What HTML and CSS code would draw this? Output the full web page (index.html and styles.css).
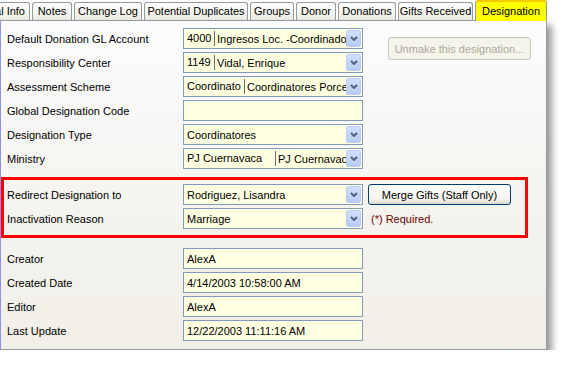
FILE: index.html
```html
<!DOCTYPE html>
<html lang="en">
<head>
    <meta charset="UTF-8">
    <meta name="viewport" content="width=device-width, initial-scale=1.0">
    <title>Designation</title>
    <link rel="stylesheet" href="styles.css">
</head>
<body>

<div class="window">
    <div class="tabs">
        <div class="tab tab-info">General Info</div>
        <div class="tab tab-notes">Notes</div>
        <div class="tab tab-log">Change Log</div>
        <div class="tab tab-dupes">Potential Duplicates</div>
        <div class="tab tab-groups">Groups</div>
        <div class="tab tab-donor">Donor</div>
        <div class="tab tab-donations">Donations</div>
        <div class="tab tab-gifts">Gifts Received</div>
        <div class="tab tab-designation active">Designation</div>
    </div>

    <div class="panel">
        <div class="top">
            <div class="form">
                <div class="row">
                    <span class="label">Default Donation GL Account</span>
                    <div class="field combo">
                        <span class="col col-narrow">4000</span>
                        <span class="col col-rest">Ingresos Loc. -Coordinado</span>
                        <span class="arrow"><svg width="8" height="5" viewBox="0 0 8 5"><path d="M1 1 L4 4 L7 1" /></svg></span>
                    </div>
                </div>
                <div class="row">
                    <span class="label">Responsibility Center</span>
                    <div class="field combo">
                        <span class="col col-narrow">1149</span>
                        <span class="col col-rest">Vidal, Enrique</span>
                        <span class="arrow"><svg width="8" height="5" viewBox="0 0 8 5"><path d="M1 1 L4 4 L7 1" /></svg></span>
                    </div>
                </div>
                <div class="row">
                    <span class="label">Assessment Scheme</span>
                    <div class="field combo">
                        <span class="col col-mid">Coordinato</span>
                        <span class="col col-rest">Coordinatores Porce</span>
                        <span class="arrow"><svg width="8" height="5" viewBox="0 0 8 5"><path d="M1 1 L4 4 L7 1" /></svg></span>
                    </div>
                </div>
                <div class="row">
                    <span class="label">Global Designation Code</span>
                    <div class="field"></div>
                </div>
                <div class="row">
                    <span class="label">Designation Type</span>
                    <div class="field combo">
                        <span class="col col-rest">Coordinatores</span>
                        <span class="arrow"><svg width="8" height="5" viewBox="0 0 8 5"><path d="M1 1 L4 4 L7 1" /></svg></span>
                    </div>
                </div>
                <div class="row">
                    <span class="label">Ministry</span>
                    <div class="field combo">
                        <span class="col col-wide">PJ Cuernavaca</span>
                        <span class="col col-rest">PJ Cuernavac</span>
                        <span class="arrow"><svg width="8" height="5" viewBox="0 0 8 5"><path d="M1 1 L4 4 L7 1" /></svg></span>
                    </div>
                </div>
            </div>
            <button class="btn disabled" disabled>Unmake this designation...</button>
        </div>

        <div class="redbox form">
            <div class="row">
                <span class="label">Redirect Designation to</span>
                <div class="field combo">
                    <span class="col col-rest">Rodriguez, Lisandra</span>
                    <span class="arrow"><svg width="8" height="5" viewBox="0 0 8 5"><path d="M1 1 L4 4 L7 1" /></svg></span>
                </div>
                <button class="btn merge">Merge Gifts (Staff Only)</button>
            </div>
            <div class="row">
                <span class="label">Inactivation Reason</span>
                <div class="field combo">
                    <span class="col col-rest">Marriage</span>
                    <span class="arrow"><svg width="8" height="5" viewBox="0 0 8 5"><path d="M1 1 L4 4 L7 1" /></svg></span>
                </div>
                <span class="required">(*) Required.</span>
            </div>
        </div>

        <div class="meta form">
            <div class="row">
                <span class="label">Creator</span>
                <div class="field"><span class="col">AlexA</span></div>
            </div>
            <div class="row">
                <span class="label">Created Date</span>
                <div class="field"><span class="col">4/14/2003 10:58:00 AM</span></div>
            </div>
            <div class="row">
                <span class="label">Editor</span>
                <div class="field"><span class="col">AlexA</span></div>
            </div>
            <div class="row">
                <span class="label">Last Update</span>
                <div class="field"><span class="col">12/22/2003 11:11:16 AM</span></div>
            </div>
        </div>
    </div>
</div>

</body>
</html>
```

FILE: styles.css
```css
body {
    margin: 0;
    background-color: white;
    font-family: "Liberation Sans", Arial, sans-serif;
    font-size: 11px;
    color: black;
}

.window {
    width: 547px;
}

/* tab strip */
.tabs {
    display: flex;
    align-items: flex-end;
    gap: 2px;
    height: 21px;
    overflow: hidden;
    margin-bottom: -1px;
    position: relative;
    z-index: 1;
}

.tab {
    flex-shrink: 0;
    box-sizing: border-box;
    height: 18px;
    line-height: 17px;
    padding: 0;
    text-align: center;
    border: 1px solid #919b9c;
    border-bottom: none;
    border-radius: 3px 3px 0 0;
    background: linear-gradient(#ffffff, #f3f2ec 70%, #e9e7de);
    white-space: nowrap;
    margin-bottom: 1px;
}

.tab-info {
    width: 70px;
    margin-left: -40px;
    text-align: right;
    padding-right: 4px;
    border-left: none;
    border-radius: 0 3px 0 0;
}

.tab-notes { width: 40px; }
.tab-log { width: 68px; }
.tab-dupes { width: 104px; }
.tab-groups { width: 44px; }
.tab-donor { width: 40px; }
.tab-donations { width: 58px; }
.tab-gifts { width: 75px; }
.tab-designation { width: 72px; }

.tab.active {
    height: 21px;
    line-height: 18px;
    margin-bottom: 0;
    border-top: 2px solid #f5c800;
    background: #ffff00;
    box-shadow: 5px 0 6px -3px rgba(0, 0, 0, 0.45);
}

/* panel */
.panel {
    border: 1px solid #919b9c;
    border-left-color: #8f90f0;
    background: linear-gradient(#fcfcfe, #f4f3ee 60%, #f1efe7);
    padding: 7px 0 8px;
    box-shadow: 5px 5px 7px rgba(0, 0, 0, 0.4);
}

.top {
    display: flex;
    align-items: flex-start;
}

.form {
    display: flex;
    flex-direction: column;
    gap: 3px;
}

.row {
    display: flex;
    align-items: center;
    height: 21px;
}

.label {
    width: 176px;
    padding-left: 6px;
    white-space: nowrap;
}

.field {
    box-sizing: border-box;
    width: 180px;
    height: 21px;
    border: 1px solid #7f9db9;
    background-color: #ffffe1;
    display: flex;
    align-items: center;
    overflow: hidden;
}

.col {
    padding-left: 3px;
    white-space: nowrap;
    overflow: hidden;
}

.col-narrow,
.col-mid,
.col-wide {
    box-sizing: border-box;
    border-right: 1px solid #6f6f6f;
    height: 15px;
    line-height: 15px;
    flex-shrink: 0;
}

.col-narrow { width: 31px; }
.col-mid { width: 61px; }
.col-wide { width: 92px; }

.col-rest {
    flex: 1;
    padding-left: 2px;
}

.combo .col-rest:first-child {
    padding-left: 3px;
}

.arrow {
    flex-shrink: 0;
    width: 15px;
    height: 17px;
    margin-right: 1px;
    box-sizing: border-box;
    border: 1px solid #bccbf4;
    border-radius: 2px;
    background: linear-gradient(#d2defc, #b7cbf7);
    display: flex;
    align-items: center;
    justify-content: center;
}

.arrow path {
    fill: none;
    stroke: #4d6185;
    stroke-width: 2;
}

/* buttons */
.btn {
    font-family: inherit;
    font-size: 11px;
    box-sizing: border-box;
    width: 143px;
    border-radius: 3px;
    padding: 0;
}

.btn.disabled {
    height: 23px;
    margin: 9px 0 0 25px;
    border: 1px solid #c9c7ba;
    background-color: #f5f4ea;
    color: #aca899;
}

.btn.merge {
    height: 21px;
    margin-left: 5px;
    border: 1px solid #003c74;
    background: linear-gradient(#ffffff, #f4f3ee 75%, #dcd7cb);
    color: black;
}

/* highlighted group */
.redbox {
    box-sizing: border-box;
    width: 527px;
    margin-top: 8px;
    border: 3px solid #ff0000;
    padding: 4px 0 6px;
}

.redbox .label {
    width: 176px;
    padding-left: 3px;
}

.required {
    margin-left: 8px;
    color: #6b0000;
}

.meta {
    margin-top: 10px;
}
```
